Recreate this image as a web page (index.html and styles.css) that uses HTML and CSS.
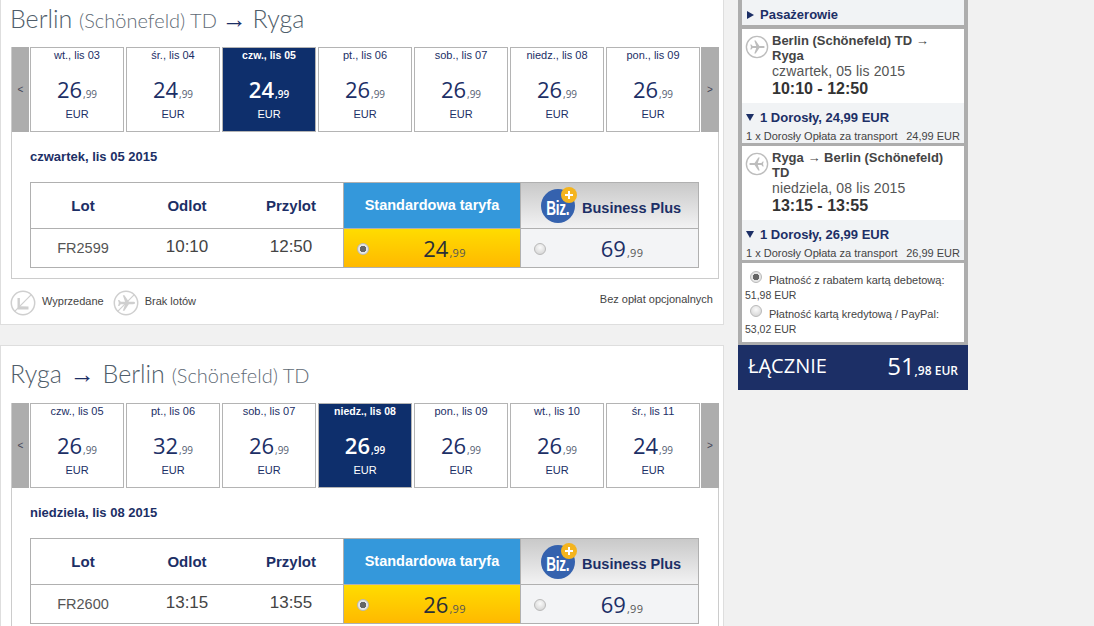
FILE: index.html
```html
<!DOCTYPE html>
<html lang="pl">
<head>
<meta charset="utf-8">
<title>Wybór lotów</title>
<link rel="stylesheet" href="styles.css">
</head>
<body>
<svg class="defs" width="0" height="0" aria-hidden="true">
  <defs>
    <symbol id="plane" viewBox="0 0 24 24">
      <path d="M22 12c0-.8-1-1.300-2.200-1.300h-4.700L10.300 3.600H8.500l2.500 7.100H6.300L4.600 8.700H3.300l.9 3.300-.9 3.300h1.300l1.700-2h4.700l-2.500 7.100h1.800l4.800-7.100h4.700C21 13.300 22 12.800 22 12z"/>
    </symbol>
  </defs>
</svg>
<div class="page">
  <main class="left">
    <section class="panel first">
      <h2 class="route">Berlin <small>(Schönefeld) TD</small> <span class="arr">→</span> Ryga</h2>
      <div class="box">
        <div class="days">
          <div class="nav">&lt;</div>
          <div class="day"><div class="dname">wt., lis 03</div><div class="price">26<small>,99</small></div><div class="cur">EUR</div></div>
          <div class="day"><div class="dname">śr., lis 04</div><div class="price">24<small>,99</small></div><div class="cur">EUR</div></div>
          <div class="day sel"><div class="dname">czw., lis 05</div><div class="price">24<small>,99</small></div><div class="cur">EUR</div></div>
          <div class="day"><div class="dname">pt., lis 06</div><div class="price">26<small>,99</small></div><div class="cur">EUR</div></div>
          <div class="day"><div class="dname">sob., lis 07</div><div class="price">26<small>,99</small></div><div class="cur">EUR</div></div>
          <div class="day"><div class="dname">niedz., lis 08</div><div class="price">26<small>,99</small></div><div class="cur">EUR</div></div>
          <div class="day"><div class="dname">pon., lis 09</div><div class="price">26<small>,99</small></div><div class="cur">EUR</div></div>
          <div class="nav">&gt;</div>
        </div>
        <div class="date">czwartek, lis 05 2015</div>
        <div class="fares">
          <div class="th">Lot</div><div class="th">Odlot</div><div class="th">Przylot</div>
          <div class="th std">Standardowa taryfa</div>
          <div class="th biz"><span class="logo"><span class="biztext">Biz.</span><i class="plus"></i></span><span class="bizname">Business Plus</span></div>
          <div class="td code">FR2599</div><div class="td time">10:10</div><div class="td time">12:50</div>
          <div class="td pick y"><i class="radio on"></i><span class="fare">24<small>,99</small></span></div>
          <div class="td pick g"><i class="radio"></i><span class="fare navy">69<small>,99</small></span></div>
        </div>
      </div>
      <div class="legend">
        <span class="lg">
          <svg class="ring" viewBox="0 0 26 26"><circle cx="13" cy="13" r="11.700"/><path class="cut" d="M21.300 4.700 4.700 21.300"/><path class="fill" d="M7.500 8h2.400v8.300l8.600.3v2.800H7.500z"/></svg>
          Wyprzedane</span>
        <span class="lg">
          <svg class="ring" viewBox="0 0 26 26"><circle cx="13" cy="13" r="11.700"/><use href="#plane" x="2" y="2" width="22" height="22" class="fill"/><path class="cut" d="M21.300 4.700 4.700 21.300"/></svg>
          Brak lotów</span>
        <span class="opt">Bez opłat opcjonalnych</span>
      </div>
    </section>
    <section class="panel second">
      <h2 class="route">Ryga <span class="arr">→</span> Berlin <small>(Schönefeld) TD</small></h2>
      <div class="box">
        <div class="days">
          <div class="nav">&lt;</div>
          <div class="day"><div class="dname">czw., lis 05</div><div class="price">26<small>,99</small></div><div class="cur">EUR</div></div>
          <div class="day"><div class="dname">pt., lis 06</div><div class="price">32<small>,99</small></div><div class="cur">EUR</div></div>
          <div class="day"><div class="dname">sob., lis 07</div><div class="price">26<small>,99</small></div><div class="cur">EUR</div></div>
          <div class="day sel"><div class="dname">niedz., lis 08</div><div class="price">26<small>,99</small></div><div class="cur">EUR</div></div>
          <div class="day"><div class="dname">pon., lis 09</div><div class="price">26<small>,99</small></div><div class="cur">EUR</div></div>
          <div class="day"><div class="dname">wt., lis 10</div><div class="price">26<small>,99</small></div><div class="cur">EUR</div></div>
          <div class="day"><div class="dname">śr., lis 11</div><div class="price">24<small>,99</small></div><div class="cur">EUR</div></div>
          <div class="nav">&gt;</div>
        </div>
        <div class="date">niedziela, lis 08 2015</div>
        <div class="fares">
          <div class="th">Lot</div><div class="th">Odlot</div><div class="th">Przylot</div>
          <div class="th std">Standardowa taryfa</div>
          <div class="th biz"><span class="logo"><span class="biztext">Biz.</span><i class="plus"></i></span><span class="bizname">Business Plus</span></div>
          <div class="td code">FR2600</div><div class="td time">13:15</div><div class="td time">13:55</div>
          <div class="td pick y"><i class="radio on"></i><span class="fare">26<small>,99</small></span></div>
          <div class="td pick g"><i class="radio"></i><span class="fare navy">69<small>,99</small></span></div>
        </div>
      </div>
    </section>
  </main>
  <aside class="side">
    <div class="frame">
      <div class="pax"><i class="tri right"></i>Pasażerowie</div>
      <div class="leg">
        <svg class="pl" viewBox="0 0 26 26"><circle cx="13" cy="13" r="11.500"/><use href="#plane" x="3" y="3" width="20" height="20"/></svg>
        <div class="info"><b>Berlin (Schönefeld) TD → Ryga</b><div class="dt">czwartek, 05 lis 2015</div><strong>10:10 - 12:50</strong></div>
      </div>
      <div class="cost"><div class="adult"><i class="tri down"></i>1 Dorosły, 24,99 EUR</div><div class="line"><span>1 x Dorosły Opłata za transport</span><span>24,99 EUR</span></div></div>
      <div class="leg">
        <svg class="pl back" viewBox="0 0 26 26"><circle cx="13" cy="13" r="11.500"/><use href="#plane" x="3" y="3" width="20" height="20"/></svg>
        <div class="info"><b>Ryga → Berlin (Schönefeld) TD</b><div class="dt">niedziela, 08 lis 2015</div><strong>13:15 - 13:55</strong></div>
      </div>
      <div class="cost"><div class="adult"><i class="tri down"></i>1 Dorosły, 26,99 EUR</div><div class="line"><span>1 x Dorosły Opłata za transport</span><span>26,99 EUR</span></div></div>
      <div class="pay">
        <div class="opt-pay"><i class="radio on"></i><span>Płatność z rabatem kartą debetową:</span></div>
        <div class="sum">51,98 EUR</div>
        <div class="opt-pay"><i class="radio"></i><span>Płatność kartą kredytową / PayPal:</span></div>
        <div class="sum">53,02 EUR</div>
      </div>
    </div>
    <div class="total"><span>ŁĄCZNIE</span><span class="amt">51<small>,98 EUR</small></span></div>
  </aside>
</div>
</body>
</html>
```

FILE: styles.css
```css
* { box-sizing: border-box; }
html, body { margin: 0; height: 626px; overflow: hidden; background: #f1f1f1; }
body { font-family: "Liberation Sans", Arial, sans-serif; color: #444; }
.defs { position: absolute; }
i { display: block; font-style: normal; }

.page { display: flex; align-items: flex-start; gap: 14px; height: 626px; overflow: hidden; }
.left { width: 724px; flex: none; }
.panel { background: #fff; border: 1px solid #dedede; border-top: 0; padding: 0 5px 0 10px; }
.panel.first { height: 325px; padding-top: 3px; }
.panel.second { margin-top: 20px; height: 300px; border-top: 1px solid #dedede; padding-top: 12px; }
.second .route { height: 45px; }

.route { margin: 0; height: 44px; font: 300 25px/30px Lato, sans-serif; color: #4f5d6a; white-space: nowrap; text-indent: -1px; }
.route small { font-size: 20px; color: #5f6b76; }
.route .arr { font-family: "Liberation Sans", sans-serif; color: #1c2f66; font-weight: 700; margin: 0 -1px 0 -2px; }
.second .route .arr { margin: 0 1px; }

.box { width: 708px; border: 1px solid #ccc; border-top: 0; height: 232px; padding-bottom: 10px; }
.second .box { height: 260px; }
.days { display: flex; gap: 2px; height: 85px; }
.nav { width: 17px; flex: none; margin-right: -1px; background: #adadad; color: #445; font-size: 10px; display: flex; align-items: center; justify-content: center; }
.nav:last-child { margin: 0 0 0 -1px; width: 18px; }
.day { width: 94px; flex: none; border: 1px solid #b4b4b4; background: #fff; color: #1c2f66; text-align: center; font-size: 11px; }
.dname { line-height: 14px; height: 25px; }
.price { font: 400 22px/30px "Open Sans", sans-serif; height: 31px; padding-top: 1px; color: #1c2f66; }
.price small { font-size: 10px; color: #555e72; margin-left: 1px; }
.cur { font-size: 11px; line-height: 14px; margin-top: 3px; }
.day.sel { background: #0e2f6c; border-color: #b4b4b4; color: #fff; }
.day.sel .dname { font-weight: 700; font-size: 10.500px; }
.day.sel .price, .day.sel .price small { color: #fff; font-weight: 600; }

.date { margin: 17px 0 0 18px; height: 33px; font-size: 13px; line-height: 15px; font-weight: 700; color: #1c2f66; }
.fares { margin-left: 18px; width: 669px; display: grid; grid-template-columns: 104px 104px 104px 178px 177px; grid-template-rows: 46px 38px; border: 1px solid #b0b0b0; }
.th { display: flex; align-items: center; justify-content: center; font-size: 15px; font-weight: 700; color: #1c2f66; border-bottom: 1px solid #b0b0b0; }
.th.std { background: #3498db; color: #fff; border-left: 1px solid #b0b0b0; border-right: 1px solid #b0b0b0; font-size: 14.500px; padding-bottom: 2px; }
.th.biz { background: linear-gradient(#c9c9c9, #f2f2f3); gap: 7px; justify-content: flex-start; padding: 0 0 0 20px; }
.bizname { font-size: 14.500px; padding-top: 5px; }
.logo { position: relative; width: 34px; height: 34px; border-radius: 50%; background: #3562ae; display: flex; align-items: center; justify-content: center; margin-top: 1px; }
.biztext { display: block; color: #fff; font: 700 20px/1 "Liberation Sans", sans-serif; transform: scaleX(.68); letter-spacing: -.5px; margin-top: 3px; }
.plus { position: absolute; top: -2px; right: -2px; width: 16px; height: 16px; border-radius: 50%; background: linear-gradient(#fff, #fff) center / 8px 2px no-repeat, linear-gradient(#fff, #fff) center / 2px 8px no-repeat, #f4b41e; }
.td { display: flex; align-items: center; justify-content: center; color: #444; }
.code { font-size: 14.500px; color: #555; }
.time { font-size: 17px; color: #444; padding-bottom: 2px; }
.pick { position: relative; padding-left: 25px; }
.pick .radio { position: absolute; left: 13px; top: 14px; }
.y { background: linear-gradient(#ffdc00, #ffb900); border-left: 1px solid #b0b0b0; border-right: 1px solid #b0b0b0; }
.g { background: #f3f4f6; }
.fare { font: 400 22px/1 "Open Sans", sans-serif; color: #2a2f38; }
.fare small { font-size: 11px; color: #555; margin-left: 1px; letter-spacing: .3px; }
.fare.navy { color: #1c2f66; }
.radio { width: 12px; height: 12px; flex: none; border-radius: 50%; border: 1px solid #b9b9b9; background: radial-gradient(circle at 50% 35%, #fafafa, #cfcfcf); }
.radio.on { background: radial-gradient(circle, #666 0 3px, #e6e6e6 3.500px); }

.legend { display: flex; align-items: center; height: 43px; margin-left: -1px; font-size: 11px; color: #444; }
.lg { display: flex; align-items: center; gap: 6px; margin-right: 9px; }
.ring { width: 26px; height: 26px; transform: translateY(2px); }
.ring circle { fill: none; stroke: #cfcfcf; stroke-width: 1.500; }
.ring .fill { fill: #cfcfcf; }
.ring .cut { stroke: #cfcfcf; stroke-width: 1.200; fill: none; }
.opt { margin-left: auto; padding: 0 5px 3px 0; font-size: 11px; }

.side { width: 230px; flex: none; }
.frame { background: #adadad; padding: 0 4px 3px; }
.pax { height: 25px; background: #f1f3f5; display: flex; align-items: center; gap: 6px; padding: 4px 0 0 5px; font-size: 13px; font-weight: 700; color: #1c2f66; }
.tri { width: 0; height: 0; flex: none; }
.tri.right { border-left: 7px solid #1c2f66; border-top: 4px solid transparent; border-bottom: 4px solid transparent; }
.tri.down { border-top: 7px solid #1c2f66; border-left: 4px solid transparent; border-right: 4px solid transparent; }
.leg { margin-top: 4px; height: 74px; background: #fff; display: flex; gap: 3px; padding: 4px 0 0 3px; }
.cost + .leg { margin-top: 3px; }
.pl { width: 24px; height: 24px; flex: none; margin-top: 2px; }
.pl circle { fill: none; stroke: #bdbdbd; stroke-width: 1.500; }
.pl use { fill: #bdbdbd; }
.pl.back { transform: scaleX(-1); }
.info { font-size: 13px; line-height: 15px; color: #444; flex: 1; }
.info b { display: block; color: #444; }
.dt { font-size: 14px; line-height: 16px; letter-spacing: .12px; color: #555; }
.info strong { display: block; font-size: 16px; line-height: 17px; margin-top: 1px; color: #333; }
.cost { height: 40px; background: #f1f3f5; padding: 7px 4px 0; }
.adult { display: flex; align-items: center; gap: 4px; font-size: 13px; font-weight: 700; line-height: 15px; color: #1c2f66; }
.adult .tri { margin-right: 2px; }
.line { display: flex; justify-content: space-between; font-size: 11px; line-height: 14px; color: #444; margin-top: 4px; }
.pay { margin-top: 3px; height: 79px; background: #fff; padding: 8px 3px 0; font-size: 11px; color: #444; line-height: 15px; }
.opt-pay { display: flex; align-items: flex-start; gap: 7px; padding-left: 5px; }
.opt-pay span { margin-top: 2px; }
.sum { font-size: 10.500px; margin-bottom: 2px; }
.total { height: 45px; background: #1c2f66; color: #fff; display: flex; align-items: center; justify-content: space-between; padding: 0 10px 3px; font: 400 20px/1 "Open Sans", sans-serif; }
.amt { font-size: 24px; font-weight: 400; }
.amt small { font-size: 12px; font-weight: 600; }
```
